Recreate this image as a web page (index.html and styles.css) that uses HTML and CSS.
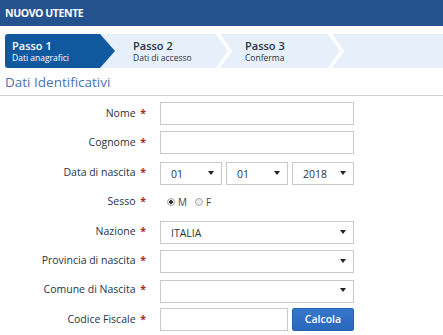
FILE: index.html
```html
<!DOCTYPE html>
<html lang="it">
<head>
    <meta charset="UTF-8">
    <meta name="viewport" content="width=device-width, initial-scale=1.0">
    <title>Nuovo utente</title>
    <link rel="stylesheet" href="styles.css">
</head>
<body>
    <div class="header">NUOVO UTENTE</div>

    <div class="steps">
        <div class="step active">
            <span class="step-title">Passo 1</span>
            <span class="step-sub">Dati anagrafici</span>
        </div>
        <div class="step step-2">
            <span class="step-title">Passo 2</span>
            <span class="step-sub">Dati di accesso</span>
        </div>
        <svg class="chevron" width="16" height="34" viewBox="0 0 16 34">
            <polyline points="1,-1 14,17 1,35" />
        </svg>
        <div class="step step-3">
            <span class="step-title">Passo 3</span>
            <span class="step-sub">Conferma</span>
        </div>
        <svg class="chevron" width="16" height="34" viewBox="0 0 16 34">
            <polyline points="1,-1 14,17 1,35" />
        </svg>
    </div>

    <h2 class="section-title">Dati Identificativi</h2>

    <form class="form">
        <label class="label">Nome <span class="req">*</span></label>
        <input type="text" class="field">

        <label class="label">Cognome <span class="req">*</span></label>
        <input type="text" class="field">

        <label class="label">Data di nascita <span class="req">*</span></label>
        <div class="date-row">
            <span class="select-wrap"><select class="field"><option>01</option></select></span>
            <span class="select-wrap"><select class="field"><option>01</option></select></span>
            <span class="select-wrap"><select class="field"><option>2018</option></select></span>
        </div>

        <label class="label">Sesso <span class="req">*</span></label>
        <div class="radios">
            <label class="radio"><input type="radio" name="sesso" checked> M</label>
            <label class="radio"><input type="radio" name="sesso"> F</label>
        </div>

        <label class="label">Nazione <span class="req">*</span></label>
        <span class="select-wrap"><select class="field"><option>ITALIA</option></select></span>

        <label class="label">Provincia di nascita <span class="req">*</span></label>
        <span class="select-wrap"><select class="field"><option></option></select></span>

        <label class="label">Comune di Nascita <span class="req">*</span></label>
        <span class="select-wrap"><select class="field"><option></option></select></span>

        <label class="label">Codice Fiscale <span class="req">*</span></label>
        <div class="cf-row">
            <input type="text" class="field">
            <button type="button" class="btn">Calcola</button>
        </div>
    </form>
</body>
</html>
```

FILE: styles.css
```css
body {
    margin: 0;
    font-family: 'Open Sans', sans-serif;
    color: #263444;
    background: #fff;
}

.header {
    height: 26px;
    line-height: 27px;
    background-color: #24528f;
    color: #fff;
    font-size: 10.5px;
    font-weight: 700;
    letter-spacing: -0.4px;
    padding-left: 5px;
}

/* wizard steps */
.steps {
    display: flex;
    height: 34px;
    margin: 8px 0 0 5px;
    background-color: #e7f0fa;
}

.step {
    display: flex;
    flex-direction: column;
    justify-content: center;
    color: #263444;
}

.step.active {
    width: 103px;
    padding-left: 7px;
    background-color: #11599f;
    color: #fff;
    border-radius: 3px 0 0 3px;
    clip-path: polygon(0 0, 95px 0, 110px 50%, 95px 100%, 0 100%);
}

.step-2 {
    width: 83px;
    padding-left: 18px;
}

.step-3 {
    width: 83px;
    padding-left: 13px;
}

.step-title {
    font-size: 11px;
    font-weight: 600;
    line-height: 13px;
}

.step-sub {
    font-size: 8.5px;
    line-height: 12px;
}

.chevron polyline {
    fill: none;
    stroke: #fff;
    stroke-width: 3.5;
}

.section-title {
    margin: 4px 0 0;
    padding: 0 0 3px 5px;
    height: 20px;
    line-height: 21px;
    font-size: 13.5px;
    font-weight: 400;
    color: #4b73b0;
    border-bottom: 1px solid #cfcfcf;
}

/* form */
.form {
    display: grid;
    grid-template-columns: 146px 194px;
    column-gap: 14px;
    row-gap: 6.4px;
    margin-top: 6px;
    grid-auto-rows: 23px;
}

.label {
    text-align: right;
    font-size: 10.5px;
    line-height: 23px;
}

.req {
    color: #b0262b;
    font-weight: 700;
    margin-left: 2px;
}

.field {
    box-sizing: border-box;
    width: 100%;
    height: 23px;
    margin: 0;
    border: 1px solid #c9c9c9;
    border-radius: 0;
    background: #fff;
    font-family: 'Open Sans', sans-serif;
    font-size: 10.5px;
    color: #263444;
    padding: 0 10px;
    appearance: none;
    -webkit-appearance: none;
    outline: none;
}

.select-wrap {
    position: relative;
    display: block;
}

.select-wrap::after {
    content: "";
    position: absolute;
    right: 8px;
    top: 10px;
    border-left: 3px solid transparent;
    border-right: 3px solid transparent;
    border-top: 4.5px solid #222;
    pointer-events: none;
}

.date-row {
    display: grid;
    grid-template-columns: 62px 62px 62px;
    column-gap: 4px;
}

.radios {
    display: flex;
    align-items: center;
    gap: 8px;
    padding-left: 7px;
    font-size: 10px;
    color: #444;
}

.radio {
    display: flex;
    align-items: center;
    gap: 3px;
}

.radio input {
    appearance: none;
    -webkit-appearance: none;
    width: 8px;
    height: 8px;
    margin: 0;
    border: 1px solid #a9a9a9;
    border-radius: 50%;
    background: #ececec;
    box-sizing: border-box;
}

.radio input:checked {
    background: radial-gradient(circle, #333 0 1.6px, #ececec 2px);
}

.cf-row {
    display: grid;
    grid-template-columns: 128px 62px;
    column-gap: 4px;
}

.btn {
    height: 23px;
    border: 1px solid #2763b3;
    border-radius: 2px;
    background: linear-gradient(#3577cb, #2a68bb);
    color: #fff;
    font-family: 'Open Sans', sans-serif;
    font-size: 10.5px;
    font-weight: 600;
    padding: 0;
    cursor: pointer;
}
```
